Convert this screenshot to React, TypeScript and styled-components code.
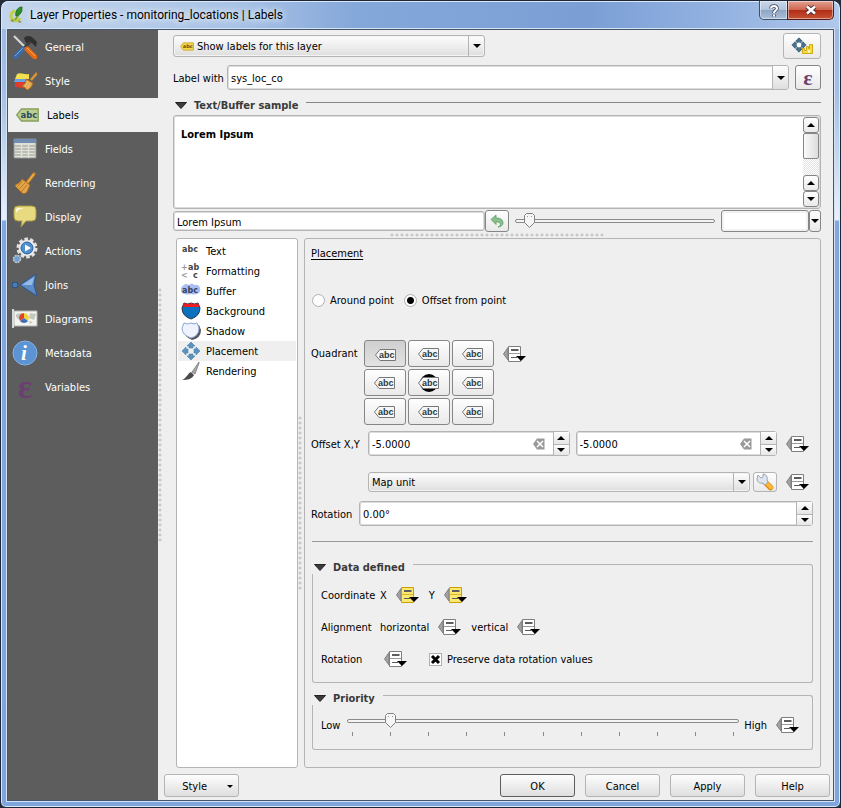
import React, { useState } from "react";
import styled, { createGlobalStyle, css } from "styled-components";

const UI_FONT = '"DejaVu Sans Condensed", "DejaVu Sans", "Noto Sans", sans-serif';
const LINE = "#b4b4b4";
const FACE = "linear-gradient(#fdfdfd, #ebebeb 60%, #dedede)";

const thumb = `url("data:image/svg+xml,%3Csvg xmlns='http://www.w3.org/2000/svg' width='11' height='15'%3E%3Cpath d='M2.5 .5h6l2 2v7l-5 5-5-5v-7z' fill='%23f6f6f6' stroke='%23808080'/%3E%3Cpath d='M3 3.5h1M7 3.5h1' stroke='%23999'/%3E%3C/svg%3E")`;

const GlobalStyle = createGlobalStyle`
  *, *::before, *::after { box-sizing: border-box; }
  body { margin: 0; background: #262c38; }
  body, button, input, select {
    font-family: ${UI_FONT};
    font-size: 11px;
    line-height: 14px;
    color: #000;
  }
  button { padding: 0; cursor: default; }
`;

/* ---------- window frame ---------- */

const Window = styled.div`
  min-height: 100vh;
  display: flex;
  flex-direction: column;
  padding: 0 6px 6px;
  border: 1px solid #1d2737;
  border-radius: 8px 8px 6px 6px;
  background: linear-gradient(#9ab8e0 0, #a3bfe4 90px, #e9f0f9 219px, #82a7de 220px, #7fa5dd 100%);
  box-shadow: inset 0 0 0 1px #dbe8f8;
`;

const TitleBar = styled.header`
  height: 28px;
  flex: none;
  display: flex;
  align-items: center;
  gap: 5px;
  margin: 0 -5px;
  padding: 0 5px 0 7px;
  border-radius: 7px 7px 0 0;
  box-shadow: inset 0 1px 0 #dbe8f8;
  background: linear-gradient(90deg, #c3d5ec 0, #a9c3e6 28%, #85a8da 42%, #7b9fd5 70%, #93b2e1 86%, #b0c8ea 100%);
`;

const Title = styled.h1`
  flex: 1;
  margin: 0;
  font-family: Roboto, "Open Sans", sans-serif;
  font-size: 12px;
  line-height: 16px;
  font-weight: 400;
  text-shadow: 0 0 8px #fff, 0 0 6px #e8f1fc;
`;

const WindowButtons = styled.div`
  display: flex;
  align-self: flex-start;
`;

const WindowButton = styled.button<{ $danger?: boolean }>`
  display: flex;
  align-items: center;
  justify-content: center;
  width: ${(p) => (p.$danger ? 47 : 29)}px;
  height: 19px;
  border: 1px solid ${(p) => (p.$danger ? "#571a1c" : "#3f4f66")};
  border-top: 0;
  border-radius: ${(p) => (p.$danger ? "0 0 5px 0" : "0 0 0 5px")};
  margin-right: ${(p) => (p.$danger ? 0 : -1)}px;
  box-shadow: inset 0 0 0 1px rgba(255, 255, 255, 0.45);
  background: ${(p) =>
    p.$danger
      ? "linear-gradient(#e3a193, #cf6650 48%, #b02c17 50%, #c65232)"
      : "linear-gradient(#c9d8ea, #b2c4dc 48%, #8da4c3 50%, #a9bfdb)"};
`;

const Client = styled.div`
  flex: 1;
  display: flex;
  border: 1px solid #44556c;
  background: #efefef;
  box-shadow: 0 0 0 1px #d3e2f5;
`;

/* ---------- category sidebar ---------- */

const Sidebar = styled.nav`
  width: 150px;
  flex: none;
  background: #5d5d5d;
`;

const Category = styled.button<{ $active?: boolean }>`
  display: flex;
  align-items: center;
  gap: 7px;
  width: 100%;
  height: 34px;
  padding: 0 4px;
  padding-left: ${(p) => (p.$active ? 6 : 4)}px;
  border: 0;
  text-align: left;
  color: ${(p) => (p.$active ? "#000" : "#fff")};
  background: ${(p) => (p.$active ? "#efefef" : "transparent")};
`;

const CategoryIcon = styled.span`
  display: flex;
  justify-content: center;
  flex: none;
  width: 26px;
`;

const Caption = styled.span`
  display: block;
  padding-top: 2px;
`;

const Grip = styled.div<{ $vertical?: boolean }>`
  flex: none;
  background-image: radial-gradient(circle at 2px 2px, #bdbdbd 0, #cdcdcd 1px, transparent 2px);
  background-size: 5px 5px;
  ${(p) =>
    p.$vertical
      ? css`
          width: 5px;
          height: 255px;
          max-height: 33%;
          align-self: center;
        `
      : css`
          width: 33%;
          height: 5px;
          margin-top: 1px;
          align-self: center;
        `}
`;

/* ---------- page ---------- */

const Main = styled.main`
  flex: 1;
  min-width: 0;
  display: flex;
  flex-direction: column;
  margin-left: 1px;
`;

const Page = styled.div`
  flex: 1;
  display: flex;
  flex-direction: column;
  padding: 3px 12px 6px 9px;
`;

const Row = styled.div<{ $gap?: number; $top?: number; $height?: number; $right?: number }>`
  display: flex;
  align-items: center;
  gap: ${(p) => p.$gap ?? 0}px;
  margin-top: ${(p) => p.$top ?? 0}px;
  padding-right: ${(p) => p.$right ?? 0}px;
  ${(p) => p.$height && `height: ${p.$height}px;`}
`;

const FieldLabel = styled.label<{ $width?: number }>`
  flex: none;
  padding-top: 2px;
  white-space: nowrap;
  ${(p) => p.$width && `width: ${p.$width}px;`}
`;

const Spacer = styled.div`
  flex: 1;
`;

const boxed = css`
  border: 1px solid ${LINE};
  border-radius: 3px;
`;

const Combo = styled.div<{ $height: number; $plain?: boolean }>`
  ${boxed}
  flex: 1;
  min-width: 0;
  display: flex;
  align-items: center;
  height: ${(p) => p.$height}px;
  background: ${(p) => (p.$plain ? "#fff" : FACE)};
  box-shadow: inset 0 0 0 1px ${(p) => (p.$plain ? "#dcdcdc" : "#f4f4f4")};
  svg { flex: none; }
`;

const HalfCombo = styled(Combo)`
  flex: 0 1 312px;
  padding-left: 6px;
`;

const Select = styled.select`
  flex: 1;
  min-width: 0;
  height: 100%;
  appearance: none;
  border: 0;
  padding: 2px 3px 0;
  background: transparent;
`;

const TextInput = styled.input`
  flex: 1;
  min-width: 0;
  height: 100%;
  border: 0;
  padding: 2px 3px 0;
  background: transparent;
  outline: none;
`;

const DropCell = styled.span`
  display: flex;
  align-items: center;
  justify-content: center;
  width: 16px;
  align-self: stretch;
  border-left: 1px solid ${LINE};
`;

const DropButton = styled.button`
  display: flex;
  align-items: center;
  justify-content: center;
  width: 16px;
  align-self: stretch;
  border: 0;
  border-left: 1px solid ${LINE};
  border-radius: 0 2px 2px 0;
  background: ${FACE};
`;

const ToolButton = styled.button<{ $w: number; $h: number; $dark?: boolean; $pressed?: boolean }>`
  display: flex;
  align-items: center;
  justify-content: center;
  flex: none;
  width: ${(p) => p.$w}px;
  height: ${(p) => p.$h}px;
  border: 1px solid ${(p) => (p.$dark ? "#868686" : LINE)};
  border-radius: 3px;
  background: ${(p) => (p.$pressed ? "linear-gradient(#cfcfcf, #e2e2e2)" : "linear-gradient(#fefefe, #e9e9e9)")};
  ${(p) => p.$pressed && "padding: 2px 0 0 2px;"}
`;

const HeaderRow = styled.div<{ $top: number }>`
  display: flex;
  height: 14px;
  margin-top: ${(p) => p.$top}px;
`;

const Collapse = styled.button`
  display: flex;
  align-items: center;
  gap: 7px;
  border: 0;
  padding: 0 8px 0 2px;
  background: transparent;
  color: #3a3a3a;
  font-weight: 700;
  white-space: nowrap;
`;

const Rule = styled.span<{ $framed?: boolean }>`
  flex: 1;
  margin-top: 4px;
  border-top: 1px solid ${(p) => (p.$framed ? LINE : "#868686")};
  ${(p) =>
    p.$framed &&
    css`
      border-right: 1px solid ${LINE};
      border-top-right-radius: 3px;
    `}
`;

const Groups = styled.div`
  padding-left: 1px;
`;

const GroupBody = styled.div`
  border: 1px solid ${LINE};
  border-top: 0;
  border-radius: 0 0 3px 3px;
  padding: 5px 12px 7px 8px;
`;

const PriorityBody = styled(GroupBody)`
  display: flex;
  align-items: center;
  gap: 5px;
  padding-top: 8px;
  padding-bottom: 12px;
`;

/* ---------- sample preview ---------- */

const Preview = styled.div`
  ${boxed}
  display: flex;
  height: 94px;
  margin-top: 3px;
  padding: 1px;
  background: #fff;
  box-shadow: inset 0 0 0 1px #dcdcdc;
`;

const PreviewText = styled.p`
  flex: 1;
  margin: 11px 6px;
  font-size: 11px;
  font-weight: 700;
`;

const ScrollBar = styled.div`
  display: flex;
  flex-direction: column;
  width: 16px;
  background: repeating-conic-gradient(#e2e2e2 0 25%, #fff 0 50%) 0 0 / 2px 2px;
`;

const ScrollThumb = styled.div`
  flex: none;
  height: 26px;
  border: 1px solid #868686;
  border-radius: 2px;
  background: linear-gradient(90deg, #fafafa, #dcdcdc);
`;

const SampleField = styled(Combo)`
  flex: 0 1 312px;
`;

const SampleSlider = styled.div`
  display: flex;
  flex: 1;
  margin: 0 6px;
`;

const Range = styled.input`
  appearance: none;
  flex: 1;
  min-width: 0;
  width: 100%;
  height: 15px;
  margin: 0;
  background: transparent;
  &::-webkit-slider-runnable-track {
    height: 4px;
    border: 1px solid #8a8a8a;
    border-radius: 2px;
    background: #f4f4f4;
  }
  &::-webkit-slider-thumb {
    appearance: none;
    width: 11px;
    height: 15px;
    margin: -7px -1px 0;
    background: ${thumb} no-repeat;
  }
`;

const ColorWell = styled.button`
  width: 88px;
  height: 22px;
  border: 1px solid #868686;
  border-radius: 3px;
  background: #fff;
  box-shadow: inset 0 0 0 2px #f1f1f1;
`;

/* ---------- label settings ---------- */

const Settings = styled.div`
  flex: 1;
  display: flex;
  margin-left: 3px;
`;

const OptionList = styled.ul`
  ${boxed}
  width: 122px;
  flex: none;
  margin: 0;
  padding: 2px 1px;
  list-style: none;
  background: #fff;
`;

const Option = styled.button<{ $active?: boolean }>`
  display: flex;
  align-items: center;
  gap: 5px;
  width: 100%;
  height: 20px;
  padding: 0 3px;
  border: 0;
  background: ${(p) => (p.$active ? "#efefef" : "transparent")};
  svg { flex: none; }
`;

const Panel = styled.section`
  ${boxed}
  flex: 1;
  min-width: 0;
  margin-left: 1px;
  padding: 8px 7px 17px 6px;
`;

const PanelTitle = styled.h2`
  margin: 0;
  font-size: 11px;
  line-height: 14px;
  font-weight: 400;
  text-decoration: underline;
  text-underline-offset: 2px;
`;

const RadioGroup = styled.div`
  display: flex;
  gap: 10px;
  margin-top: 32px;
  padding-left: 1px;
`;

const Check = styled.label`
  display: flex;
  align-items: center;
  gap: 5px;
  height: 14px;
`;

const Radio = styled.input`
  appearance: none;
  width: 13px;
  height: 13px;
  margin: 0;
  border: 1px solid #b0b0b0;
  border-radius: 50%;
  background: #fdfdfd;
  &:checked {
    background: radial-gradient(circle, #000 0 3px, #fdfdfd 4px);
  }
`;

const CheckBox = styled.input`
  appearance: none;
  width: 13px;
  height: 13px;
  margin: 0;
  border: 1px solid #b0b0b0;
  background: #fdfdfd;
  &:checked {
    background: #fdfdfd
      url("data:image/svg+xml,%3Csvg xmlns='http://www.w3.org/2000/svg' width='11' height='11'%3E%3Cpath d='M2 2l7 7M9 2l-7 7' stroke='%23000' stroke-width='3'/%3E%3C/svg%3E")
      center no-repeat;
  }
`;

const QuadrantRow = styled.div`
  display: flex;
  margin-top: 33px;
`;

const QuadrantGrid = styled.div`
  display: grid;
  grid-template-columns: repeat(3, 42px);
  gap: 2px;
  margin-right: 9px;
`;

const QuadrantCell = styled.div<{ $width: number }>`
  width: ${(p) => p.$width}px;
  height: 27px;
  display: flex;
  align-items: center;
`;

const Override = styled.button`
  display: flex;
  flex: none;
  border: 0;
  background: transparent;
`;

const Spin = styled(Combo)`
  height: 25px;
`;

const ClearButton = styled.button`
  display: flex;
  border: 0;
  margin-right: 8px;
  background: transparent;
`;

const SpinButtons = styled.div`
  display: grid;
  grid-template-rows: 1fr 1fr;
  width: 16px;
  align-self: stretch;
  border-left: 1px solid ${LINE};
`;

const SpinButton = styled.button`
  display: flex;
  align-items: center;
  justify-content: center;
  border: 0;
  background: linear-gradient(#fdfdfd, #e6e6e6);
  & + & { border-top: 1px solid ${LINE}; }
`;

const OffsetFields = styled.div`
  display: flex;
  flex: 1;
  gap: 6px;
  margin-right: 9px;
`;

const UnitFields = styled(OffsetFields)`
  gap: 3px;
`;

const Divider = styled.hr`
  width: 100%;
  margin: 15px 0 0;
  border: 0;
  border-top: 1px solid #9a9a9a;
`;

const SliderColumn = styled.div`
  flex: 1;
  height: 24px;
`;

const PriorityRange = styled(Range)`
  display: block;
`;

const Ticks = styled.div`
  display: flex;
  justify-content: space-between;
  margin-top: 4px;
  padding: 0 5px;
`;

const Tick = styled.span`
  width: 1px;
  height: 4px;
  background: #8a8a8a;
`;

const EndLabel = styled(Caption)`
  margin-right: 4px;
`;

const Footer = styled.footer`
  display: flex;
  gap: 10px;
  padding: 0 3px 3px 0;
`;

const PushButton = styled.button<{ $primary?: boolean }>`
  flex: none;
  width: 75px;
  height: 23px;
  padding-top: 2px;
  border: 1px solid ${(p) => (p.$primary ? "#5c5c5c" : LINE)};
  border-radius: 3px;
  background: ${FACE};
`;

const MenuButton = styled(PushButton)`
  display: flex;
  align-items: center;
  justify-content: flex-end;
  gap: 20px;
  padding-right: 5px;
`;

/* ---------- icons ---------- */

const EpsilonGlyph = styled.span<{ $size: number }>`
  font-family: "Liberation Serif", serif;
  font-size: ${(p) => p.$size}px;
  line-height: 1;
  font-weight: 700;
  color: #6b3f70;
`;

const Down = ({ w = 8 }: { w?: number }) => (
  <svg width={w} height={w / 2} viewBox="0 0 8 4"><path d="M0 0h8L4 4z" fill="#000" /></svg>
);
const Up = () => (
  <svg width="8" height="4" viewBox="0 0 8 4"><path d="M0 4h8L4 0z" fill="#000" /></svg>
);
const Twist = () => (
  <svg width="12" height="7" viewBox="0 0 12 7"><path d="M.5 .5h11L6 6.500z" fill="#3c3c3c" stroke="#222" /></svg>
);

const abcFont = { fontFamily: '"DejaVu Sans", sans-serif', fontWeight: 700 };
const abcTagFont = { fontFamily: '"Liberation Sans", sans-serif', fontWeight: 700 };

const AppLogo = () => (
  <svg width="16" height="18" viewBox="0 0 16 18">
    <path d="M6 5C2 6 1 10 3 13c2 3 7 2 8-1" fill="none" stroke="#c3cf4a" strokeWidth="3" />
    <path d="M6 14l7-10" stroke="#7da32c" strokeWidth="2" />
    <path d="M13 1c-4 0-7 4-6 9 4-1 6-4 6-9z" fill="#2f8f2c" stroke="#1f6c22" />
    <path d="M1 15l3-2 1 3zM9 14l4 2-3 1z" fill="#83953a" />
  </svg>
);

const TagIcon = ({ yellow }: { yellow?: boolean }) => (
  <svg width={yellow ? 14 : 25} height={yellow ? 9 : 14} viewBox="0 0 25 15">
    <path d="M1 7.5L6 1h18v13H6z" fill={yellow ? "#f3d94c" : "#bccf8f"} stroke={yellow ? "#c9a52b" : "#8aa05c"} strokeWidth="1.500" />
    <text x="5" y="11" fontSize="9" fill={yellow ? "#5c4a10" : "#2b4a60"} style={abcFont}>abc</text>
  </svg>
);

const Tools = () => (
  <svg width="24" height="24" viewBox="0 0 24 24">
    <path d="M1 1l11 11" stroke="#d5d5d5" strokeWidth="2.200" />
    <path d="M11 3c3-3 7-2 9 0l4 4-1 5-3-3-3-2-4 1z" fill="#303030" />
    <path d="M17 7L9 15" stroke="#3d3d3d" strokeWidth="2.500" />
    <path d="M10 14l-8 8" stroke="#3a6aa8" strokeWidth="5" strokeLinecap="round" />
    <path d="M10 13l-8 8" stroke="#79a4d8" strokeWidth="1" />
    <path d="M14 14l8 8" stroke="#e86a10" strokeWidth="5" strokeLinecap="round" />
    <path d="M14 13l8 8" stroke="#ffa95c" strokeWidth="1" />
  </svg>
);

const BrushColors = () => (
  <svg width="24" height="24" viewBox="0 0 24 24">
    <path d="M4 5c4-2 7 1 12 0v5H2z" fill="#f4e04d" />
    <path d="M2 10h11v3H1z" fill="#6c9fe0" />
    <path d="M2 13h9l5 6c-5 1-9-1-14-1z" fill="#e23b2e" />
    <path d="M24 4l-6 7" stroke="#d9943a" strokeWidth="2.500" />
    <path d="M13 10l7 4c-1 4-3 6-6 7-2-3-4-3-5-4 3-2 4-4 4-7z" fill="#e0a34a" stroke="#a86a1f" />
    <path d="M15 12l-3 6M17 14l-3 6" stroke="#f2c981" />
  </svg>
);

const TableIcon = () => (
  <svg width="24" height="24" viewBox="0 0 24 24">
    <path d="M1 2h22v19H1z" fill="#dfe1d8" stroke="#8a8f90" />
    <path d="M1 2h22v4H1z" fill="#6f8db2" />
    <path d="M2 9h20M2 12h20M2 15h20M2 18h20" stroke="#96988f" />
    <path d="M8.500 6v15M15.500 6v15" stroke="#dfe1d8" strokeWidth="1.500" />
  </svg>
);

const Broom = () => (
  <svg width="24" height="24" viewBox="0 0 24 24">
    <path d="M21 3l-7 9" stroke="#c47c22" strokeWidth="3.500" strokeLinecap="round" />
    <path d="M21 3l-7 9" stroke="#efb055" strokeWidth="1.500" />
    <path d="M9 8l8 6-3 7c-2 2-4 2-5 1l-7-7c0-2 5-2 7-7z" fill="#e3a347" stroke="#a96b1e" />
    <path d="M9 11l-5 5M12 12l-6 6M14 14l-6 7" stroke="#b87a2b" />
  </svg>
);

const Bubble = () => (
  <svg width="24" height="24" viewBox="0 0 24 24">
    <path d="M5 1h14q4 0 4 4v7q0 4-4 4h-6l-5 6 1-6H5q-4 0-4-4V5q0-4 4-4z" fill="#e8da80" stroke="#a99b40" />
    <path d="M3 8V5q0-2 2-2h6q-6 1-8 5z" fill="#fffbe0" />
  </svg>
);

const Gears = () => (
  <svg width="26" height="28" viewBox="0 0 26 28">
    <circle cx="15" cy="11" r="9" fill="#8a8a8a" stroke="#e2e2e2" strokeWidth="3" strokeDasharray="3.500 2.155" />
    <circle cx="15" cy="11" r="8" fill="#f1f1f1" />
    <circle cx="15" cy="11" r="6" fill="#4f8fd0" stroke="#2c5f9e" />
    <path d="M13 7.500l6 3.500-6 3.500z" fill="#fff" />
    <circle cx="5" cy="22" r="3.500" fill="#6fa2d2" stroke="#c4cbd2" strokeWidth="1.500" strokeDasharray="2 .75" />
  </svg>
);

const JoinIcon = () => (
  <svg width="26" height="24" viewBox="0 0 26 24">
    <path d="M8 12L24 1l-2 11 3 11z" fill="#5d8cc9" stroke="#28588f" />
    <path d="M10 12l12-8-2 8z" fill="#95bae6" />
    <circle cx="3" cy="12" r="3" fill="#4a7ab8" stroke="#26507f" />
  </svg>
);

const DiagramIcon = () => (
  <svg width="26" height="24" viewBox="0 0 26 24">
    <path d="M2 4h23v15H2z" fill="#f3f3ef" stroke="#b4b4b0" />
    <path d="M4 7l6-1 1 4-4 3-3-3zM18 6l6 1-2 6-5-2zM17 14l4 1-3 2z" fill="#c3c9c0" />
    <path d="M1 2v19" stroke="#d8d8d8" strokeWidth="2" />
    <path d="M12 11V6a5 5 0 0 0-4 8z" fill="#e0402c" />
    <path d="M12 11V6a5 5 0 0 1 4 8z" fill="#f2d43a" />
    <path d="M12 11l4 3a5 5 0 0 1-8 0z" fill="#3f6fb6" />
  </svg>
);

const InfoIcon = () => (
  <svg width="26" height="26" viewBox="0 0 26 26">
    <circle cx="13" cy="13" r="12" fill="#5b93d3" stroke="#86b2e4" />
    <text x="9" y="20" fontSize="21" fill="#fff" fontStyle="italic" style={{ fontFamily: '"Liberation Serif", serif', fontWeight: 700 }}>i</text>
  </svg>
);

const Arrows = ({ dark }: { dark?: boolean }) => (
  <g fill={dark ? "#4c7690" : "#5a93c0"} stroke={dark ? "#1f4258" : "#4a7fab"} strokeWidth=".6">
    <path d="M10 1l4 4h-2v2H8V5H6zM10 19l4-4h-2v-2H8v2H6zM1 10l4-4v2h2v4H5v2zM19 10l-4-4v2h-2v4h2v2z" />
  </g>
);

const MoveEngine = () => (
  <svg width="24" height="20" viewBox="0 0 24 20">
    <svg width="16" height="16" viewBox="0 0 20 20" x="1" y="1">
      <path d="M10 1l9 9-9 9-9-9z" fill="#8fb0c4" />
      <Arrows dark />
      <circle cx="10" cy="10" r="3" fill="#fff" />
    </svg>
    <path d="M12.500 17.500v-5h2v2h2v-4h2v2h1v-4h3v9z" fill="#f7dc3a" stroke="#cfa91a" />
    <path d="M18 15.500h2" stroke="#fff" strokeWidth="2" />
  </svg>
);

const UndoIcon = () => (
  <svg width="14" height="14" viewBox="0 0 14 14">
    <path d="M1 5.500L6 1v3c5 0 7 2 7 5 0 2-2 4-5 4 2-1 3-2 2-4-1-1-2-1-4-1v2.500z" fill="#8abf8c" stroke="#5f9f67" strokeWidth=".8" />
  </svg>
);

const OverrideIcon = ({ on }: { on?: boolean }) => (
  <svg width="24" height="18" viewBox="0 0 24 18">
    <path d="M5 2.500V15L.5 9z" fill="#a2a2a2" stroke="#808080" />
    <path d="M5.500 1.500h12v15h-12z" fill={on ? "#fbe870" : "#fff"} stroke={on ? "#c9a000" : "#7e7e7e"} />
    <path d="M8 5h7.500" stroke="#5c5c5c" strokeWidth="2" />
    <path d="M6 8.500h11" stroke={on ? "#d8b52a" : "#9a9a9a"} />
    <path d="M8 12.500h6" stroke="#5c5c5c" />
    <path d="M13 11h10l-5 5z" fill="#000" />
  </svg>
);

const QuadIcon = ({ center }: { center?: boolean }) => (
  <svg width="24" height="20" viewBox="0 0 24 20">
    {center && <circle cx="12" cy="10" r="9" fill="#000" />}
    <path d="M1.500 10L6 4.500h15.500v11H6z" fill="#f7f7f7" stroke="#777" />
    <text x="5" y="13" fontSize="9" fill="#2c3a42" style={abcTagFont}>abc</text>
  </svg>
);

const ClearIcon = () => (
  <svg width="12" height="12" viewBox="0 0 12 12">
    <path d="M0 6l4-5.500h7.500v11H4z" fill="#999" />
    <path d="M4 3l6 6M10 3L4 9" stroke="#fff" strokeWidth="1.500" />
  </svg>
);

const Wrench = () => (
  <svg width="18" height="18" viewBox="0 0 18 18">
    <path d="M9 9l5.500 5.500" stroke="#d98a10" strokeWidth="5.500" strokeLinecap="round" />
    <path d="M9.500 9l5.500 5.500" stroke="#fbb83c" strokeWidth="3.500" strokeLinecap="round" />
    <path d="M2 2l3 3 2-1 0-3c3 0 5 3 4 6l1 2-3 3-2-2c-3 1-6-1-6-4z" fill="#dfe5ee" stroke="#9aa5b8" />
  </svg>
);

const optionIcons: Record<string, React.ReactNode> = {
  Text: <text x="1" y="11" fontSize="8" fill="#444" style={abcFont}>abc</text>,
  Formatting: (
    <g fontSize="8" fill="#444" style={abcFont}>
      <text x="0" y="9" fill="#999">+</text>
      <text x="7" y="9">ab</text>
      <text x="0" y="17" fill="#999">&lt;</text>
      <text x="12" y="17">c</text>
    </g>
  ),
  Buffer: (
    <g>
      <path d="M3 4q2-2 5 0 3-3 5 0 5-1 6 3 1 5-3 6-4 1-6 0-3 1-6 0-4 0-4-4 0-4 3-5z" fill="#a9bdf5" />
      <text x="1" y="12" fontSize="8" fill="#35425e" style={abcFont}>abc</text>
    </g>
  ),
  Background: (
    <g>
      <path d="M3 2q4 2 7 0 3 2 7 0l2 5q0 8-9 11Q1 15 1 7z" fill="#0b70bf" stroke="#24343f" />
      <path d="M3 2q4 2 7 0 3 2 7 0l1.500 4h-17z" fill="#ea1c24" />
    </g>
  ),
  Shadow: (
    <g>
      <path d="M5 4q4 2 7 0 3 2 6 0l2 5q0 8-9 10-8-3-8-10z" fill="#555" />
      <path d="M3 2q4 2 7 0 3 2 6 0l2 5q0 8-8 10Q1 14 1 7z" fill="#eef3ff" stroke="#8fa5d8" />
    </g>
  ),
  Placement: <Arrows />,
  Rendering: (
    <g>
      <path d="M18 1l-7 10 3 2 4-11z" fill="#aaa" stroke="#777" strokeWidth=".8" />
      <path d="M10 11l3 3c-2 4-6 5-12 5 5-2 5-6 9-8z" fill="#4b4b4b" />
    </g>
  ),
};

/* ---------- data ---------- */

const categories: [string, React.ReactNode][] = [
  ["General", <Tools />],
  ["Style", <BrushColors />],
  ["Labels", <TagIcon />],
  ["Fields", <TableIcon />],
  ["Rendering", <Broom />],
  ["Display", <Bubble />],
  ["Actions", <Gears />],
  ["Joins", <JoinIcon />],
  ["Diagrams", <DiagramIcon />],
  ["Metadata", <InfoIcon />],
  ["Variables", <EpsilonGlyph $size={34}>ε</EpsilonGlyph>],
];

const quadrants = [
  "Above left", "Above", "Above right",
  "Left", "Over", "Right",
  "Below left", "Below", "Below right",
];

/* ---------- composed parts ---------- */

const OverrideButton = ({ label, on }: { label: string; on?: boolean }) => (
  <Override type="button" aria-label={label}><OverrideIcon on={on} /></Override>
);

const SpinField = ({ id, label, initial, clearable }: { id: string; label?: string; initial: string; clearable?: boolean }) => {
  const [value, setValue] = useState(initial);
  return (
    <Spin $height={25} $plain>
      <TextInput id={id} aria-label={label} value={value} onChange={(e) => setValue(e.target.value)} />
      {clearable && <ClearButton type="button" aria-label="Clear" onClick={() => setValue("")}><ClearIcon /></ClearButton>}
      <SpinButtons>
        <SpinButton type="button" aria-label="Increase"><Up /></SpinButton>
        <SpinButton type="button" aria-label="Decrease"><Down /></SpinButton>
      </SpinButtons>
    </Spin>
  );
};

const GroupHeader = ({ title, top, framed }: { title: string; top: number; framed?: boolean }) => (
  <HeaderRow $top={top}>
    <Collapse type="button" aria-expanded="true"><Twist /><Caption>{title}</Caption></Collapse>
    <Rule $framed={framed} />
  </HeaderRow>
);

export default function App() {
  const [category, setCategory] = useState("Labels");
  const [option, setOption] = useState("Placement");
  const [quadrant, setQuadrant] = useState(0);
  const [sample, setSample] = useState("Lorem Ipsum");

  return (
    <>
      <GlobalStyle />
      <Window>
        <TitleBar>
          <AppLogo />
          <Title>Layer Properties - monitoring_locations | Labels</Title>
          <WindowButtons>
            <WindowButton type="button" aria-label="What's this">
              <svg width="10" height="13" viewBox="0 0 10 13">
                <path d="M2 4.500C2 1 8 1 8 4.500 8 6.500 5 6.500 5 9M5 10.500v2" fill="none" stroke="#3e4656" strokeWidth="3.500" />
                <path d="M2 4.500C2 1 8 1 8 4.500 8 6.500 5 6.500 5 9M5 10.500v2" fill="none" stroke="#fff" strokeWidth="2" />
              </svg>
            </WindowButton>
            <WindowButton type="button" aria-label="Close" $danger>
              <svg width="12" height="10" viewBox="0 0 12 10">
                <path d="M2 1.500l8 7M10 1.500l-8 7" stroke="#4d3035" strokeWidth="4.500" />
                <path d="M2 1.500l8 7M10 1.500l-8 7" stroke="#fff" strokeWidth="2.500" />
              </svg>
            </WindowButton>
          </WindowButtons>
        </TitleBar>

        <Client>
          <Sidebar aria-label="Sections">
            {categories.map(([name, icon]) => (
              <Category key={name} type="button" $active={name === category} onClick={() => setCategory(name)}>
                <CategoryIcon>{icon}</CategoryIcon>
                <Caption>{name}</Caption>
              </Category>
            ))}
          </Sidebar>
          <Grip $vertical />

          <Main>
            <Page>
              <Row $height={26}>
                <HalfCombo $height={22}>
                  <TagIcon yellow />
                  <Select aria-label="Label mode"><option>Show labels for this layer</option></Select>
                  <DropCell><Down /></DropCell>
                </HalfCombo>
                <Spacer />
                <ToolButton type="button" aria-label="Automated placement settings" $w={38} $h={26}><MoveEngine /></ToolButton>
              </Row>

              <Row $top={6} $gap={6}>
                <FieldLabel htmlFor="expression" $width={48}>Label with</FieldLabel>
                <Combo $height={25} $plain>
                  <TextInput id="expression" defaultValue="sys_loc_co" />
                  <DropButton type="button" aria-label="Choose field"><Down /></DropButton>
                </Combo>
                <ToolButton type="button" aria-label="Expression" $w={26} $h={25} $dark>
                  <EpsilonGlyph $size={22}>ε</EpsilonGlyph>
                </ToolButton>
              </Row>

              <GroupHeader title="Text/Buffer sample" top={8} />

              <Preview>
                <PreviewText>{sample}</PreviewText>
                <ScrollBar>
                  <ToolButton type="button" aria-label="Scroll up" $w={16} $h={16} $dark><Up /></ToolButton>
                  <ScrollThumb />
                  <Spacer />
                  <ToolButton type="button" aria-label="Page up" $w={16} $h={16} $dark><Up /></ToolButton>
                  <ToolButton type="button" aria-label="Scroll down" $w={16} $h={16} $dark><Down /></ToolButton>
                </ScrollBar>
              </Preview>

              <Row $top={1}>
                <SampleField $height={20} $plain>
                  <TextInput aria-label="Sample text" value={sample} onChange={(e) => setSample(e.target.value)} />
                </SampleField>
                <ToolButton type="button" aria-label="Reset sample text" $w={24} $h={22} $dark onClick={() => setSample("Lorem Ipsum")}>
                  <UndoIcon />
                </ToolButton>
                <SampleSlider>
                  <Range type="range" aria-label="Preview zoom" min={1} max={100} defaultValue={6} />
                </SampleSlider>
                <ColorWell type="button" aria-label="Preview background" />
                <ToolButton type="button" aria-label="Preview background menu" $w={12} $h={22} $dark><Down /></ToolButton>
              </Row>

              <Grip />

              <Settings>
                <OptionList>
                  {Object.entries(optionIcons).map(([name, icon]) => (
                    <li key={name}>
                      <Option type="button" $active={name === option} onClick={() => setOption(name)}>
                        <svg width="20" height="20" viewBox="0 0 20 20">{icon}</svg>
                        <Caption>{name}</Caption>
                      </Option>
                    </li>
                  ))}
                </OptionList>
                <Grip $vertical />

                <Panel>
                  <PanelTitle>Placement</PanelTitle>

                  <RadioGroup role="radiogroup" aria-label="Placement mode">
                    <Check><Radio type="radio" name="mode" /><Caption>Around point</Caption></Check>
                    <Check><Radio type="radio" name="mode" defaultChecked /><Caption>Offset from point</Caption></Check>
                  </RadioGroup>

                  <QuadrantRow>
                    <QuadrantCell $width={53}>Quadrant</QuadrantCell>
                    <QuadrantGrid>
                      {quadrants.map((name, i) => (
                        <ToolButton
                          key={name}
                          type="button"
                          aria-label={name}
                          aria-pressed={quadrant === i}
                          $w={42}
                          $h={27}
                          $dark
                          $pressed={quadrant === i}
                          onClick={() => setQuadrant(i)}
                        >
                          <QuadIcon center={i === 4} />
                        </ToolButton>
                      ))}
                    </QuadrantGrid>
                    <QuadrantCell $width={24}><OverrideButton label="Quadrant override" /></QuadrantCell>
                  </QuadrantRow>

                  <Row $top={6} $right={3}>
                    <FieldLabel htmlFor="offset-x" $width={57}>Offset X,Y</FieldLabel>
                    <OffsetFields>
                      <SpinField id="offset-x" initial="-5.0000" clearable />
                      <SpinField id="offset-y" label="Offset Y" initial="-5.0000" clearable />
                    </OffsetFields>
                    <OverrideButton label="Offset override" />
                  </Row>

                  <Row $top={16} $right={3}>
                    <FieldLabel $width={57} />
                    <UnitFields>
                      <Combo $height={20}>
                        <Select aria-label="Offset unit"><option>Map unit</option></Select>
                        <DropCell><Down /></DropCell>
                      </Combo>
                      <ToolButton type="button" aria-label="Unit settings" $w={24} $h={20}><Wrench /></ToolButton>
                    </UnitFields>
                    <OverrideButton label="Unit override" />
                  </Row>

                  <Row $top={9}>
                    <FieldLabel htmlFor="rotation" $width={48}>Rotation</FieldLabel>
                    <SpinField id="rotation" initial="0.00°" />
                  </Row>

                  <Groups>
                    <Divider />

                    <GroupHeader title="Data defined" top={18} framed />
                    <GroupBody>
                      <Row $height={32} $gap={9}>
                        <Row><FieldLabel $width={59}>Coordinate</FieldLabel><Caption>X</Caption></Row>
                        <OverrideButton label="X override" on />
                        <Caption>Y</Caption>
                        <OverrideButton label="Y override" on />
                      </Row>
                      <Row $height={32} $gap={9}>
                        <Row><FieldLabel $width={59}>Alignment</FieldLabel><Caption>horizontal</Caption></Row>
                        <OverrideButton label="Horizontal override" />
                        <Caption>vertical</Caption>
                        <OverrideButton label="Vertical override" />
                      </Row>
                      <Row $height={32} $gap={21}>
                        <FieldLabel $width={42}>Rotation</FieldLabel>
                        <OverrideButton label="Rotation override" />
                        <Check><CheckBox type="checkbox" defaultChecked /><Caption>Preserve data rotation values</Caption></Check>
                      </Row>
                    </GroupBody>

                    <GroupHeader title="Priority" top={8} framed />
                    <PriorityBody>
                      <FieldLabel htmlFor="priority" $width={21}>Low</FieldLabel>
                      <SliderColumn>
                        <PriorityRange id="priority" type="range" min={0} max={10} defaultValue={1} />
                        <Ticks>{Array.from({ length: 11 }, (_, i) => <Tick key={i} />)}</Ticks>
                      </SliderColumn>
                      <EndLabel>High</EndLabel>
                      <OverrideButton label="Priority override" />
                    </PriorityBody>
                  </Groups>
                </Panel>
              </Settings>
            </Page>

            <Footer>
              <MenuButton type="button">Style<Down w={6} /></MenuButton>
              <Spacer />
              <PushButton type="button" $primary>OK</PushButton>
              <PushButton type="button">Cancel</PushButton>
              <PushButton type="button">Apply</PushButton>
              <PushButton type="button">Help</PushButton>
            </Footer>
          </Main>
        </Client>
      </Window>
    </>
  );
}
